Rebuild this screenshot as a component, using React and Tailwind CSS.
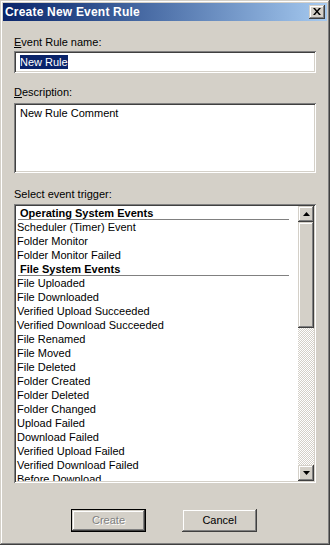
const raised =
  "shadow-[inset_-1px_-1px_#404040,inset_1px_1px_#d4d0c8,inset_-2px_-2px_#808080,inset_2px_2px_#ffffff]";
const sunken =
  "shadow-[inset_1px_1px_#808080,inset_-1px_-1px_#ffffff,inset_2px_2px_#404040,inset_-2px_-2px_#d4d0c8]";

const rows = [
  { h: "Operating System Events" },
  "Scheduler (Timer) Event",
  "Folder Monitor",
  "Folder Monitor Failed",
  { h: "File System Events" },
  "File Uploaded",
  "File Downloaded",
  "Verified Upload Succeeded",
  "Verified Download Succeeded",
  "File Renamed",
  "File Moved",
  "File Deleted",
  "Folder Created",
  "Folder Deleted",
  "Folder Changed",
  "Upload Failed",
  "Download Failed",
  "Verified Upload Failed",
  "Verified Download Failed",
  "Before Download",
];

function Arrow({ down }) {
  return (
    <svg width="7" height="4" viewBox="0 0 7 4" className="block">
      <path d={down ? "M0 0h7L3.5 4z" : "M0 4h7L3.5 0z"} fill="#000" />
    </svg>
  );
}

export default function App() {
  return (
    <div
      className={`w-[330px] h-[545px] bg-[#d4d0c8] p-[3px] flex flex-col text-[11px] leading-[13px] text-black [font-family:'Liberation_Sans',Arial,sans-serif] shadow-[inset_-1px_-1px_#404040,inset_1px_1px_#d4d0c8,inset_-2px_-2px_#808080,inset_2px_2px_#ffffff]`}
    >
      {/* title bar */}
      <div className="h-[18px] flex items-center justify-between bg-gradient-to-r from-[#0a246a] to-[#a6caf0] pl-[2px] pr-[2px]">
        <span className="text-white font-bold text-[12px] tracking-[0.2px]">Create New Event Rule</span>
        <div className={`w-[16px] h-[14px] bg-[#d4d0c8] flex items-center justify-center ${raised}`}>
          <svg width="8" height="7" viewBox="0 0 8 7" className="block -mt-[1px]">
            <path d="M0 0h2l2 2.5L6 0h2L5 3.5 8 7H6L4 4.5 2 7H0l3-3.5z" fill="#000" />
          </svg>
        </div>
      </div>

      <div className="flex flex-col px-[11px]">
        <div className="mt-[15px] h-[13px]">
          <span className="underline underline-offset-[1px]">E</span>vent Rule name:
        </div>
        <div className={`mt-[2px] h-[22px] bg-white ${sunken} flex items-center pl-[6px]`}>
          <span className="bg-[#0a246a] text-white leading-[14px]">New Rule</span>
        </div>

        <div className="mt-[13px] h-[13px]">
          <span className="underline underline-offset-[1px]">D</span>escription:
        </div>
        <div className={`mt-[4px] h-[70px] bg-white ${sunken} pl-[6px] pt-[4px]`}>New Rule Comment</div>

        <div className="mt-[15px] h-[13px]">Select event trigger:</div>
        <div className={`mt-[3px] h-[279px] bg-white ${sunken} p-[2px] flex`}>
          <div className="flex-1 overflow-hidden">
            {rows.map((r, i) =>
              typeof r === "string" ? (
                <div key={i} className="h-[14px] leading-[14px] pl-[1px] whitespace-nowrap">
                  {r}
                </div>
              ) : (
                <div key={i} className="h-[14px] flex flex-col">
                  <div className="h-[13px] leading-[14px] pl-[4px] font-bold whitespace-nowrap">{r.h}</div>
                  <div className="h-[1px] ml-[2px] w-[271px] bg-[#808080]" />
                </div>
              )
            )}
          </div>
          <div className="w-[16px] flex flex-col">
            <div className={`h-[16px] bg-[#d4d0c8] flex items-center justify-center ${raised}`}>
              <Arrow />
            </div>
            <div className={`h-[106px] bg-[#d4d0c8] ${raised}`} />
            <div className="flex-1 bg-[image:repeating-conic-gradient(#d4d0c8_0_25%,#ffffff_0_50%)] bg-[length:2px_2px]" />
            <div className={`h-[16px] bg-[#d4d0c8] flex items-center justify-center ${raised}`}>
              <Arrow down />
            </div>
          </div>
        </div>

        <div className="mt-[26px] flex gap-[36px] pl-[57px]">
          <div className="w-[75px] h-[23px] border border-black">
            <div className={`w-full h-full flex items-center justify-center text-[#808080] [text-shadow:1px_1px_#ffffff] ${raised}`}>
              Create
            </div>
          </div>
          <div className={`w-[75px] h-[23px] flex items-center justify-center ${raised}`}>Cancel</div>
        </div>
      </div>
    </div>
  );
}
